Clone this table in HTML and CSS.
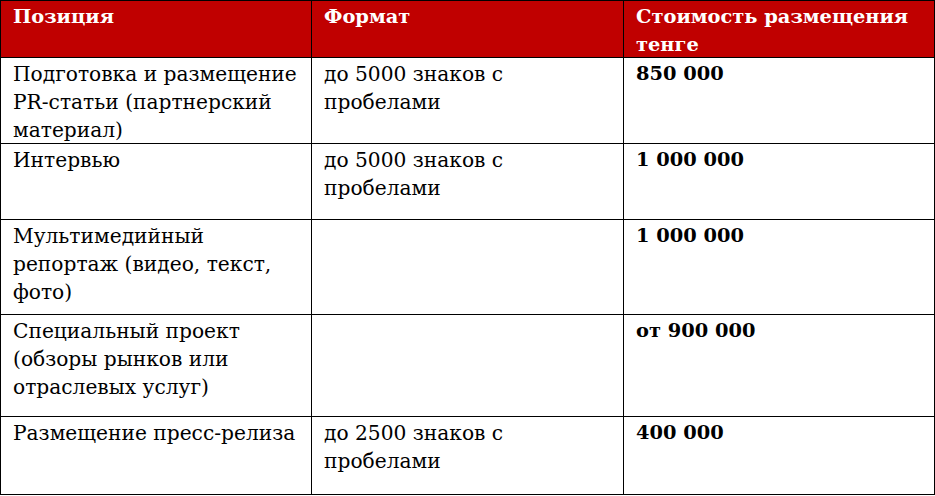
FILE: index.html
```html
<!DOCTYPE html>
<html lang="ru">
<head>
<meta charset="utf-8">
<title>Стоимость размещения</title>
<link rel="stylesheet" href="styles.css">
</head>
<body>
<div class="price-table">
  <div class="cell head">Позиция</div>
  <div class="cell head">Формат</div>
  <div class="cell head">Стоимость размещения тенге</div>

  <div class="cell">Подготовка и размещение PR-статьи (партнерский материал)</div>
  <div class="cell">до 5000 знаков с пробелами</div>
  <div class="cell price">850 000</div>

  <div class="cell">Интервью</div>
  <div class="cell">до 5000 знаков с пробелами</div>
  <div class="cell price">1 000 000</div>

  <div class="cell">Мультимедийный репортаж (видео, текст, фото)</div>
  <div class="cell"></div>
  <div class="cell price">1 000 000</div>

  <div class="cell">Специальный проект (обзоры рынков или отраслевых услуг)</div>
  <div class="cell"></div>
  <div class="cell price">от 900 000</div>

  <div class="cell">Размещение пресс-релиза</div>
  <div class="cell">до 2500 знаков с пробелами</div>
  <div class="cell price">400 000</div>
</div>
</body>
</html>
```

FILE: styles.css
```css
html, body {
  margin: 0;
  padding: 0;
  background: #ffffff;
}

.price-table {
  display: grid;
  grid-template-columns: 311px 312px 311px;
  grid-template-rows: 57px 86px 76px 95px 102px 78px;
  width: 935px;
  border-top: 1px solid #000;
  border-left: 1px solid #000;
  box-sizing: border-box;
  font-family: "DejaVu Serif", "Liberation Serif", serif;
  font-size: 20.2px;
  line-height: 28px;
  color: #000;
}

.cell {
  box-sizing: border-box;
  border-right: 1px solid #000;
  border-bottom: 1px solid #000;
  padding: 2px 8px 0 12px;
}

.head {
  background: #c00000;
  color: #ffffff;
  font-weight: bold;
  font-size: 19.4px;
}

.price {
  font-weight: bold;
  font-size: 19.4px;
}
```
